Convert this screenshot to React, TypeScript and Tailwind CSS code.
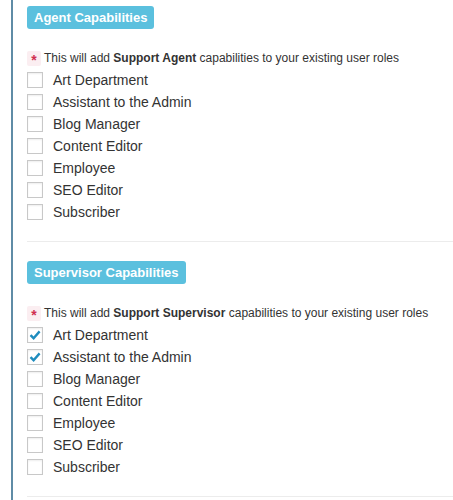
import { FunctionComponent } from 'react';

const roles = [
    'Art Department',
    'Assistant to the Admin',
    'Blog Manager',
    'Content Editor',
    'Employee',
    'SEO Editor',
    'Subscriber',
];

type SectionProps = {
    title: string;
    role: string;
    checked: string[];
    first?: boolean;
};

const Checkbox: FunctionComponent<{ checked: boolean }> = ({ checked }) => (
    <span className="flex items-center justify-center w-[16px] h-[16px] border border-[#c8c8c8] bg-white shadow-[inset_0_1px_2px_rgba(0,0,0,0.07)]">
        {checked && (
            <svg width="14" height="14" viewBox="0 0 14 14">
                <path
                    d="M2.5 7.2 L5.6 10.2 L11.6 3.4"
                    fill="none"
                    stroke="#1e8cbe"
                    strokeWidth="2.4"
                />
            </svg>
        )}
    </span>
);

const CapabilitySection: FunctionComponent<SectionProps> = ({
    title,
    role,
    checked,
    first,
}) => (
    <div
        className={`${first ? 'pt-[6px]' : 'pt-[19px]'} pb-[18px] border-b border-[#ececec]`}
    >
        <div className="flex">
            <span className="h-[23px] px-[7px] rounded-[3px] bg-[#5bc0de] text-white font-bold text-[13px] leading-[23px]">
                {title}
            </span>
        </div>
        <div className="mt-[18px] flex items-center h-[22px] text-[12px] text-[#333]">
            <span className="flex items-center justify-center w-[14px] h-[15px] mr-[3px] rounded-[2px] bg-[#fbeef1] text-[#d0304f] text-[14px] font-bold leading-none pt-[3px]">
                *
            </span>
            <span>
                This will add <b>{role}</b> capabilities to your existing
                user roles
            </span>
        </div>
        {roles.map((r) => (
            <label
                key={r}
                className="flex items-center h-[22px] text-[14px] text-[#333]"
            >
                <Checkbox checked={checked.includes(r)} />
                <span className="ml-[10px]">{r}</span>
            </label>
        ))}
    </div>
);

export default function App() {
    return (
        <div
            className="bg-white min-h-[500px] pl-[11px]"
            style={{ fontFamily: '"Liberation Sans", Arial, sans-serif' }}
        >
            <div className="border-l-2 border-[#5f8ca6] min-h-[500px] pl-[14px]">
                <CapabilitySection
                    first
                    title="Agent Capabilities"
                    role="Support Agent"
                    checked={[]}
                />
                <CapabilitySection
                    title="Supervisor Capabilities"
                    role="Support Supervisor"
                    checked={['Art Department', 'Assistant to the Admin']}
                />
            </div>
        </div>
    );
}
